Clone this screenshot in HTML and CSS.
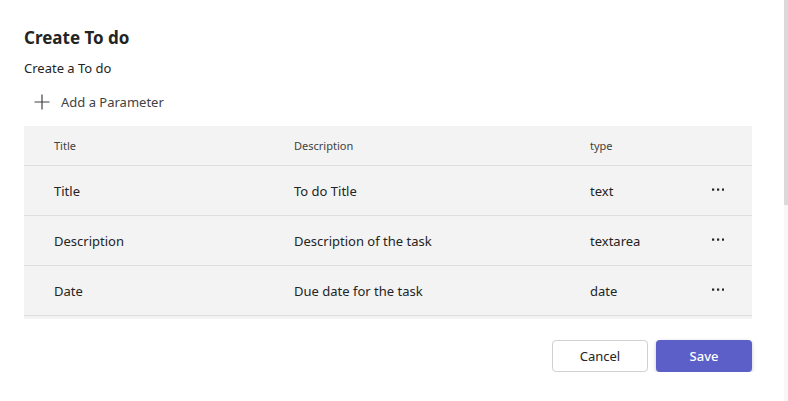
FILE: index.html
```html
<!DOCTYPE html>
<html>
<head>
<meta charset="utf-8">
<link rel="stylesheet" href="styles.css">
</head>
<body>
<div class="page">
  <h1 class="title">Create To do</h1>
  <p class="subtitle">Create a To do</p>
  <button class="add-btn">
    <svg class="plus" width="16" height="16" viewBox="0 0 16 16"><path d="M8 0.5V15.5M0.5 8H15.5" stroke="#424242" stroke-width="1.2" fill="none"/></svg>
    <span>Add a Parameter</span>
  </button>
  <div class="table">
    <div class="row head">
      <div class="c c1">Title</div>
      <div class="c c2">Description</div>
      <div class="c c3">type</div>
      <div class="c c4"></div>
    </div>
    <div class="row">
      <div class="c c1">Title</div>
      <div class="c c2">To do Title</div>
      <div class="c c3">text</div>
      <div class="c c4"><svg width="12" height="3" viewBox="0 0 12 3"><rect x="0" y="0.5" width="2.2" height="2.2" fill="#242424"/><rect x="5" y="0.5" width="2.2" height="2.2" fill="#242424"/><rect x="10" y="0.5" width="2.2" height="2.2" fill="#242424"/></svg></div>
    </div>
    <div class="row">
      <div class="c c1">Description</div>
      <div class="c c2">Description of the task</div>
      <div class="c c3">textarea</div>
      <div class="c c4"><svg width="12" height="3" viewBox="0 0 12 3"><rect x="0" y="0.5" width="2.2" height="2.2" fill="#242424"/><rect x="5" y="0.5" width="2.2" height="2.2" fill="#242424"/><rect x="10" y="0.5" width="2.2" height="2.2" fill="#242424"/></svg></div>
    </div>
    <div class="row">
      <div class="c c1">Date</div>
      <div class="c c2">Due date for the task</div>
      <div class="c c3">date</div>
      <div class="c c4"><svg width="12" height="3" viewBox="0 0 12 3"><rect x="0" y="0.5" width="2.2" height="2.2" fill="#242424"/><rect x="5" y="0.5" width="2.2" height="2.2" fill="#242424"/><rect x="10" y="0.5" width="2.2" height="2.2" fill="#242424"/></svg></div>
    </div>
  </div>
  <div class="actions">
    <button class="btn cancel">Cancel</button>
    <button class="btn save">Save</button>
  </div>
</div>
<div class="scrollbar"><div class="thumb"></div></div>
</body>
</html>
```
FILE: styles.css
```css
body {
  margin: 0;
  background: #ffffff;
  font-family: "Noto Sans", "Open Sans", sans-serif;
  color: #242424;
  overflow: hidden;
}
.page {
  padding: 26px 36px 0 24px;
}
.scrollbar {
  position: fixed;
  top: 0;
  right: 0;
  width: 4px;
  height: 100%;
  background: #f7f7f7;
}
.thumb {
  height: 205px;
  background: #dadada;
}
.title {
  margin: 0;
  font-size: 17px;
  line-height: 24px;
  font-weight: 700;
}
.subtitle {
  margin: 8px 0 0;
  font-size: 13px;
  line-height: 20px;
}
.add-btn {
  display: flex;
  align-items: center;
  gap: 11px;
  margin: 8px 0 0;
  padding: 0 0 0 10px;
  height: 32px;
  border: none;
  background: none;
  font-family: inherit;
  font-size: 13px;
  color: #424242;
  cursor: pointer;
}
.table {
  margin-top: 8px;
  background: #f3f3f3;
  padding-bottom: 3px;
}
.row {
  display: grid;
  grid-template-columns: 270px 296px 1fr 40px;
  height: 49px;
  border-bottom: 1px solid #dedede;
  align-items: center;
  font-size: 13px;
}
.row.head {
  height: 39px;
  font-size: 11px;
  color: #424242;
}
.c1 {
  padding-left: 30px;
}
.c4 {
  display: flex;
  align-items: center;
}
.c4 svg {
  display: block;
  margin-top: -2px;
}
.actions {
  display: flex;
  justify-content: flex-end;
  gap: 8px;
  margin-top: 21px;
}
.btn {
  width: 96px;
  height: 32px;
  border-radius: 4px;
  font-family: inherit;
  font-size: 13px;
  cursor: pointer;
}
.cancel {
  background: #ffffff;
  border: 1px solid #d1d1d1;
  color: #242424;
}
.save {
  background: #5b5fc7;
  border: none;
  color: #ffffff;
  font-weight: 500;
  box-shadow: 0 1px 3px rgba(0, 0, 0, 0.18), 0 2px 6px rgba(0, 0, 0, 0.08);
}
```
